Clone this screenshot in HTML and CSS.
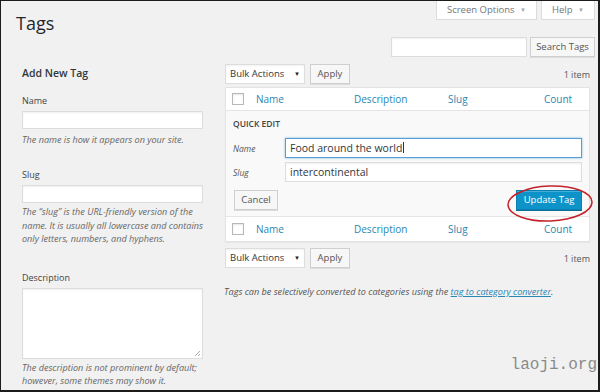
FILE: index.html
```html
<!DOCTYPE html>
<html lang="en">
<head>
<meta charset="utf-8">
<title>Tags</title>
<link rel="stylesheet" href="styles.css">
</head>
<body>
<div class="frame">
  <div class="head">
    <h1 class="title">Tags</h1>
    <div class="head-right">
      <div class="screen-meta">
        <div class="meta-btn so">Screen Options <span class="caret">▼</span></div>
        <div class="meta-btn help">Help <span class="caret">▼</span></div>
      </div>
      <div class="search">
        <div class="input search-input"></div>
        <div class="btn search-btn">Search Tags</div>
      </div>
    </div>
  </div>

  <div class="cols">
    <div class="col-left">
      <h2 class="add-title">Add New Tag</h2>
      <div class="label l-name">Name</div>
      <div class="input field"></div>
      <p class="desc d-name">The name is how it appears on your site.</p>
      <div class="label l-slug">Slug</div>
      <div class="input field f-slug"></div>
      <p class="desc d-slug">The “slug” is the URL-friendly version of the name. It is usually all lowercase and contains only letters, numbers, and hyphens.</p>
      <div class="label l-desc">Description</div>
      <div class="input textarea"><span class="grip"></span></div>
      <p class="desc d-desc">The description is not prominent by default; however, some themes may show it.</p>
    </div>

    <div class="col-right">
      <div class="bulkbar top">
        <div class="select">Bulk Actions <span class="sel-caret">▼</span></div>
        <div class="btn apply">Apply</div>
        <div class="count-items">1 item</div>
      </div>

      <div class="table">
        <div class="row head-row">
          <div class="cell"><span class="cb"></span></div>
          <div class="cell link">Name</div>
          <div class="cell link">Description</div>
          <div class="cell link">Slug</div>
          <div class="cell link">Count</div>
        </div>
        <div class="quick">
          <div class="qe-title">QUICK EDIT</div>
          <div class="qe-row first">
            <span class="qe-label">Name</span>
            <div class="input qe-input focus">Food around the world<span class="cursor"></span></div>
          </div>
          <div class="qe-row">
            <span class="qe-label">Slug</span>
            <div class="input qe-input">intercontinental</div>
          </div>
          <div class="qe-actions">
            <div class="btn cancel">Cancel</div>
            <div class="update-wrap">
              <div class="btn primary">Update Tag</div>
              <svg class="circle" width="90" height="40" viewBox="0 0 90 40"><ellipse cx="44" cy="19.5" rx="42" ry="17.5" transform="rotate(-2 44 19.5)" fill="none" stroke="#c3232b" stroke-width="1.6"/></svg>
            </div>
          </div>
        </div>
        <div class="row foot-row">
          <div class="cell"><span class="cb"></span></div>
          <div class="cell link">Name</div>
          <div class="cell link">Description</div>
          <div class="cell link">Slug</div>
          <div class="cell link">Count</div>
        </div>
      </div>

      <div class="bulkbar bottom">
        <div class="select">Bulk Actions <span class="sel-caret">▼</span></div>
        <div class="btn apply">Apply</div>
        <div class="count-items">1 item</div>
      </div>

      <p class="note">Tags can be selectively converted to categories using the <a class="note-link" href="#">tag to category converter</a>.</p>
    </div>
  </div>

  <div class="watermark">laoji.org</div>
</div>
</body>
</html>
```

FILE: styles.css
```css
* { box-sizing: border-box; }
html, body { margin: 0; padding: 0; }
body { width: 600px; height: 392px; overflow: hidden; font-family: "Open Sans", "Noto Sans", sans-serif; color: #444; }

.frame {
  position: relative;
  width: 600px;
  height: 392px;
  border: 1px solid #1c1c1c;
  border-right-width: 2px;
  border-bottom-width: 2px;
  background: #f1f1f1;
  overflow: hidden;
}

/* header */
.head { display: flex; justify-content: space-between; padding: 0 3px 0 15px; height: 56px; }
.title { margin: 11px 0 0; font-size: 18px; line-height: 22px; font-weight: 400; color: #23282d; }
.head-right { display: flex; flex-direction: column; align-items: flex-end; }
.screen-meta { display: flex; gap: 4px; }
.meta-btn {
  height: 19px;
  background: #fff;
  border: 1px solid #dcdcdc;
  border-top: none;
  font-size: 9.5px;
  line-height: 18px;
  color: #72777c;
  text-align: center;
}
.meta-btn.so { width: 101px; }
.meta-btn.help { width: 54px; }
.caret { font-size: 6px; color: #a0a5aa; margin-left: 3px; vertical-align: 1px; }

.search { display: flex; gap: 3px; margin-top: 17px; }
.input {
  background: #fff;
  border: 1px solid #ddd;
  box-shadow: inset 0 1px 2px rgba(0,0,0,.06);
}
.search-input { width: 136px; height: 20px; }
.btn {
  height: 20px;
  background: #f7f7f7;
  border: 1px solid #cfcfcf;
  box-shadow: 0 1px 0 #ddd;
  font-size: 9.5px;
  line-height: 18px;
  color: #555;
  text-align: center;
}
.search-btn { width: 65px; }

/* columns */
.cols { display: flex; gap: 22px; padding: 0 8px 0 21px; }
.col-left { width: 181px; flex: none; }
.col-right { flex: 1; }

.add-title { margin: 9px 0 0; font-size: 10.5px; line-height: 14px; font-weight: 600; color: #32373c; }
.label { font-size: 9px; line-height: 12px; color: #444; }
.l-name { margin-top: 15px; }
.l-slug { margin-top: 23px; }
.l-desc { margin-top: 26px; }
.field { height: 18px; margin-top: 4px; }
.f-slug { margin-top: 4px; }
.textarea { position: relative; height: 71px; margin-top: 4px; }
.grip {
  position: absolute; right: 2px; bottom: 2px; width: 5px; height: 5px;
  background: linear-gradient(135deg, transparent 45%, #aaa 45%, #aaa 55%, transparent 55%, transparent 75%, #aaa 75%, #aaa 85%, transparent 85%);
}
.desc { margin: 0; font-size: 9.1px; line-height: 13.5px; font-style: italic; color: #666; }
.d-name { margin-top: 5px; line-height: 12px; }
.d-slug { margin-top: 2px; }
.d-desc { margin-top: 2px; }

/* bulk bars */
.bulkbar { display: flex; align-items: center; height: 20px; }
.bulkbar.top { margin-top: 7px; }
.bulkbar.bottom { margin-top: 6px; }
.select {
  width: 80px; height: 20px;
  background: #fff;
  border: 1px solid #ddd;
  box-shadow: inset 0 1px 2px rgba(0,0,0,.06);
  font-size: 9.5px; line-height: 18px; color: #32373c;
  padding-left: 4px;
  position: relative;
}
.sel-caret { position: absolute; right: 4px; top: 0; font-size: 6px; color: #222; }
.apply { width: 40px; margin-left: 5px; }
.count-items { margin-left: auto; font-size: 9px; color: #555; }

/* table */
.table { margin-top: 3px; background: #fff; border: 1px solid #e3e3e3; box-shadow: 0 1px 1px rgba(0,0,0,.04); }
.row { display: grid; grid-template-columns: 30px 98px 94px 96px 1fr; align-items: center; }
.head-row { height: 23px; border-bottom: 1px solid #e5e5e5; }
.foot-row { height: 25px; border-top: 1px solid #e5e5e5; }
.cell { font-size: 10px; }
.link { color: #2a86b3; }
.cb {
  display: block; width: 12px; height: 12px; margin-left: 6px;
  border: 1px solid #b4b9be; background: #fff;
  box-shadow: inset 0 1px 2px rgba(0,0,0,.1);
}

.quick { background: #f9f9f9; padding: 8px 7px 6px 7px; }
.qe-title { font-size: 8.5px; line-height: 10px; font-weight: 600; color: #444; }
.qe-row { display: grid; grid-template-columns: 52px 1fr; align-items: center; margin-top: 4px; }
.qe-row.first { margin-top: 9px; }
.qe-label { font-size: 8.5px; font-style: italic; color: #555; }
.qe-input { height: 20px; font-size: 10.5px; line-height: 18px; padding-left: 4px; color: #32373c; }
.qe-input.focus { border-color: #5b9dd9; box-shadow: 0 0 2px rgba(30,140,190,.6); }
.cursor { display: inline-block; width: 1px; height: 11px; background: #333; vertical-align: -1px; margin-left: 1px; }

.qe-actions { display: flex; justify-content: space-between; margin-top: 8px; padding-left: 1px; }
.cancel { width: 44px; }
.update-wrap { position: relative; }
.primary {
  width: 66px;
  background: #0e93c9;
  border-color: #0a7fb0;
  box-shadow: inset 0 1px 0 rgba(120,200,230,.5), 0 1px 0 #0a6f99;
  color: #fff;
}
.circle { position: absolute; left: -10px; top: -6px; }

.note { margin: 17px 0 0; font-size: 9.1px; line-height: 14px; font-style: italic; color: #555; margin-left: -1px; }
.note-link { color: #2a86b3; text-decoration: underline; }

.watermark {
  position: absolute; right: 1px; top: 356px;
  font-family: "Liberation Mono", monospace; font-size: 16px; line-height: 16px;
  color: #8a8a8a;
}
```
